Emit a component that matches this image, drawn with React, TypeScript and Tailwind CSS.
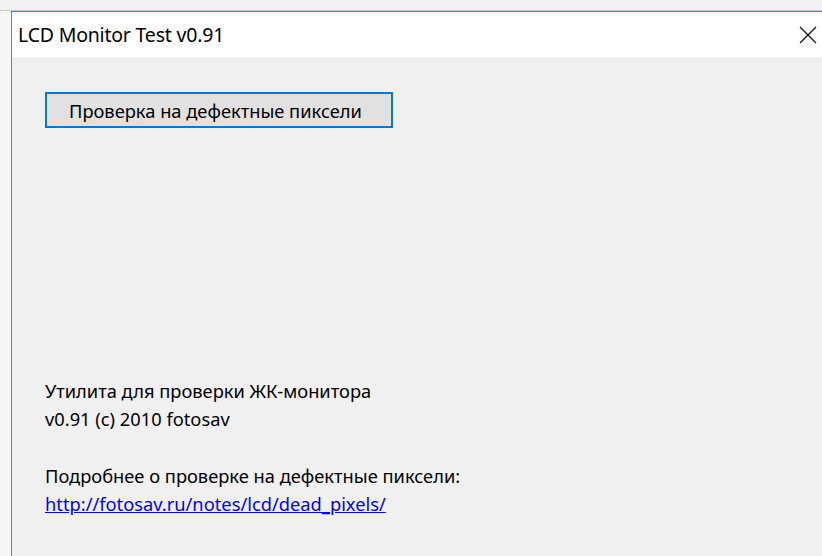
import React from 'react';

const font = { fontFamily: '"Noto Sans", "Open Sans", sans-serif' };

const App: React.FC = () => {
  return (
    <div className="w-[822px] h-[556px] overflow-hidden bg-white flex flex-col" style={font}>
      {/* window behind */}
      <div className="h-[11px] bg-[#f2f2f2] border-b border-[#c8c8c8]" />
      <div className="flex flex-1 min-h-0">
        <div className="w-[11px] bg-[#f7f7f7]" />
        <div className="flex-1 flex flex-col border-l border-t border-[#3d8ee0]">
          <div className="h-[45px] bg-white flex items-center justify-between pl-[6px] pr-[4px]">
            <span className="text-[19.5px] text-black tracking-[-0.2px]">LCD Monitor Test v0.91</span>
            <svg width="20" height="20" viewBox="0 0 20 20">
              <path d="M2 2 L18 18 M18 2 L2 18" stroke="#111" strokeWidth="1.3" fill="none" />
            </svg>
          </div>
          <div className="flex-1 bg-[#f0f0f0] flex flex-col pl-[33px] pt-[35px]">
            <button className="w-[348px] h-[36px] bg-[#e1e1e1] border-2 border-[#0078d7] text-[18.3px] text-black text-left pl-[22px] pt-[3px] leading-none">
              Проверка на дефектные пиксели
            </button>
            <div className="mt-[249px] text-[18.3px] text-black leading-[28px]">
              <p>Утилита для проверки ЖК-монитора</p>
              <p>v0.91 (c) 2010 fotosav</p>
              <p className="mt-[29px]">Подробнее о проверке на дефектные пиксели:</p>
              <a href="#" className="text-[#0000ff] underline">http://fotosav.ru/notes/lcd/dead_pixels/</a>
            </div>
          </div>
        </div>
      </div>
    </div>
  );
};

export default App;
